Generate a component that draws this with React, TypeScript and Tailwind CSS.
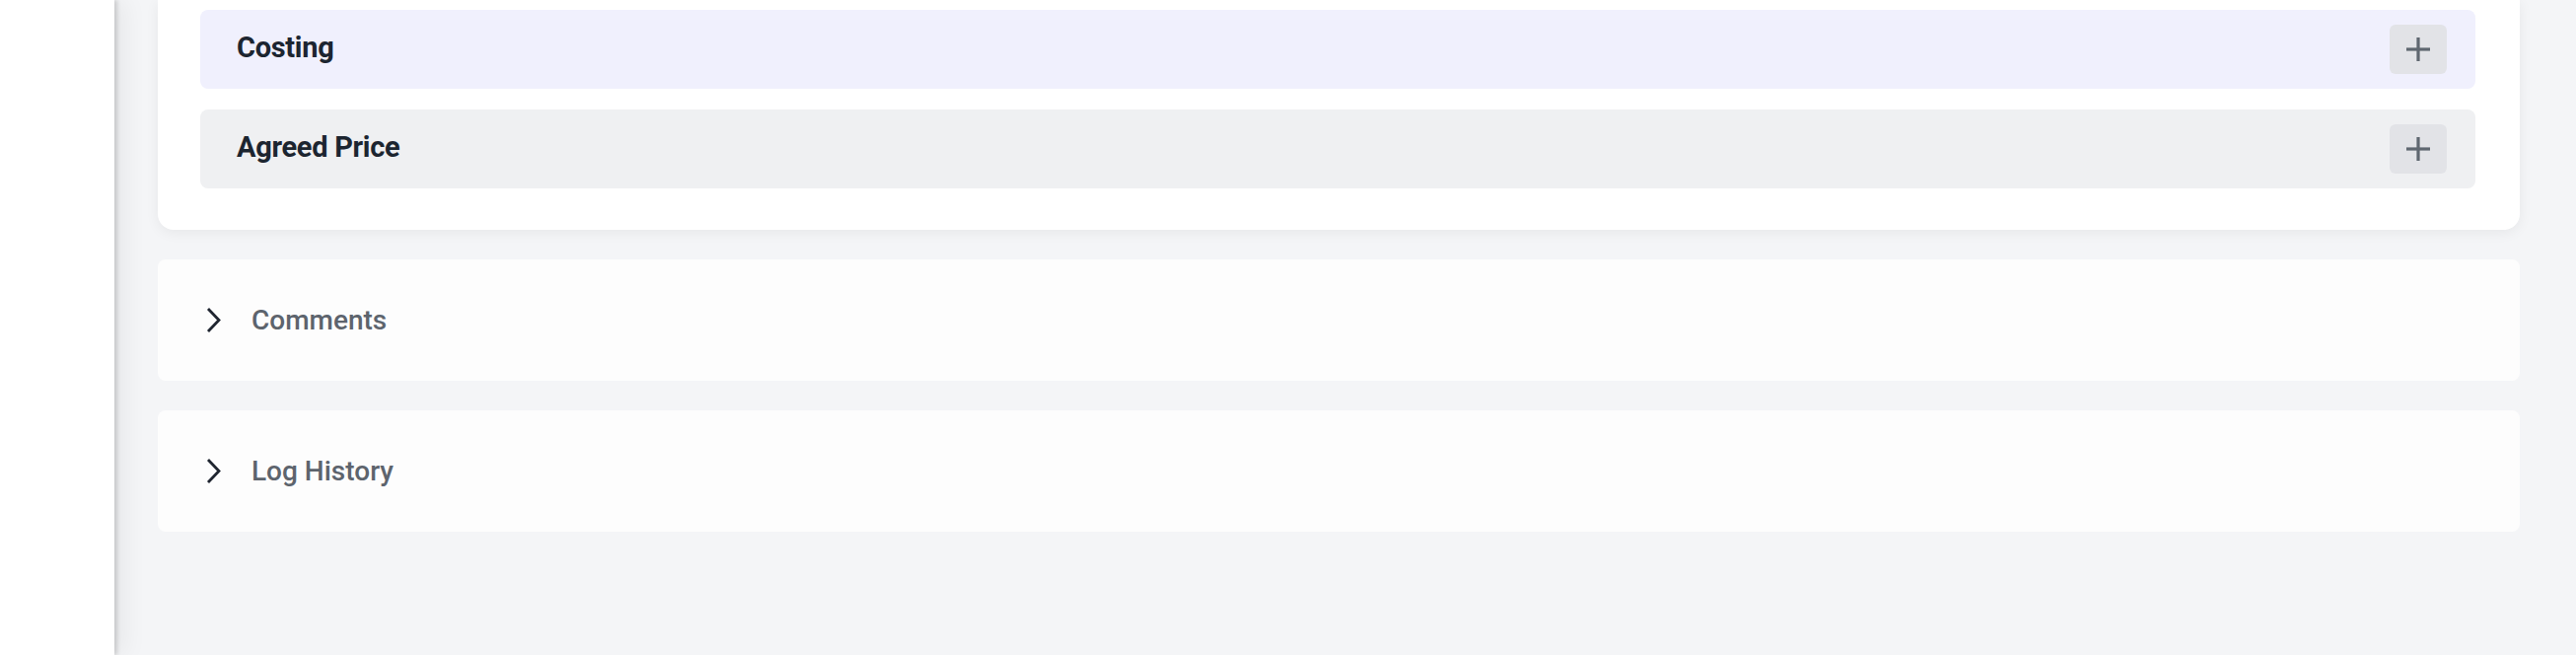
import React from 'react'

const sections = ['Costing', 'Agreed Price']

function PlusIcon() {
  return (
    <svg width="26" height="26" viewBox="0 0 26 26" fill="none" stroke="#5f6770" strokeWidth="3.2">
      <path d="M1 13h24" />
      <path d="M13 1v24" />
    </svg>
  )
}

function Chevron() {
  return (
    <svg width="17" height="27" viewBox="0 0 17 27" fill="none" stroke="#1f2530" strokeWidth="2.8" strokeLinejoin="miter">
      <polyline points="3,2 14,13.5 3,25" />
    </svg>
  )
}

function Collapsed({ title }: { title: string }) {
  return (
    <div className="flex h-[123px] items-center rounded-[8px] bg-[#fdfdfd] pl-[48px]">
      <Chevron />
      <span className="ml-[30px] font-['Roboto',sans-serif] text-[28px] font-medium text-[#5d646d]">{title}</span>
    </div>
  )
}

export default function App() {
  return (
    <div className="flex h-[664px] w-full overflow-hidden bg-[#f4f5f7]">
      {/* sidebar */}
      <aside className="relative z-10 w-[116px] shrink-0 bg-white shadow-[3px_0_4px_rgba(0,0,0,0.14),12px_0_22px_rgba(0,0,0,0.05)]" />

      <main className="flex flex-1 flex-col pl-[44px] pr-[57px]">
        <section className="flex flex-col gap-[21px] rounded-b-[16px] bg-white pt-[10px] pb-[42px] pl-[43px] pr-[45px] shadow-[0_3px_14px_rgba(0,0,0,0.06)]">
          {sections.map((s, i) => (
            <div
              key={s}
              className={`flex h-[80px] items-center justify-between rounded-[8px] pl-[37px] pr-[29px] ${
                i === 0 ? 'bg-[#f0f0fd]' : 'bg-[#eff0f2]'
              }`}
            >
              <span className="-mt-[2px] font-['Roboto',sans-serif] text-[29px] font-bold tracking-[-0.3px] text-[#1c2530]">{s}</span>
              <button className="flex h-[50px] w-[58px] items-center justify-center rounded-[6px] bg-[#e2e3e7]">
                <PlusIcon />
              </button>
            </div>
          ))}
        </section>

        <div className="mt-[30px] flex flex-col gap-[30px]">
          <Collapsed title="Comments" />
          <Collapsed title="Log History" />
        </div>
      </main>
    </div>
  )
}
